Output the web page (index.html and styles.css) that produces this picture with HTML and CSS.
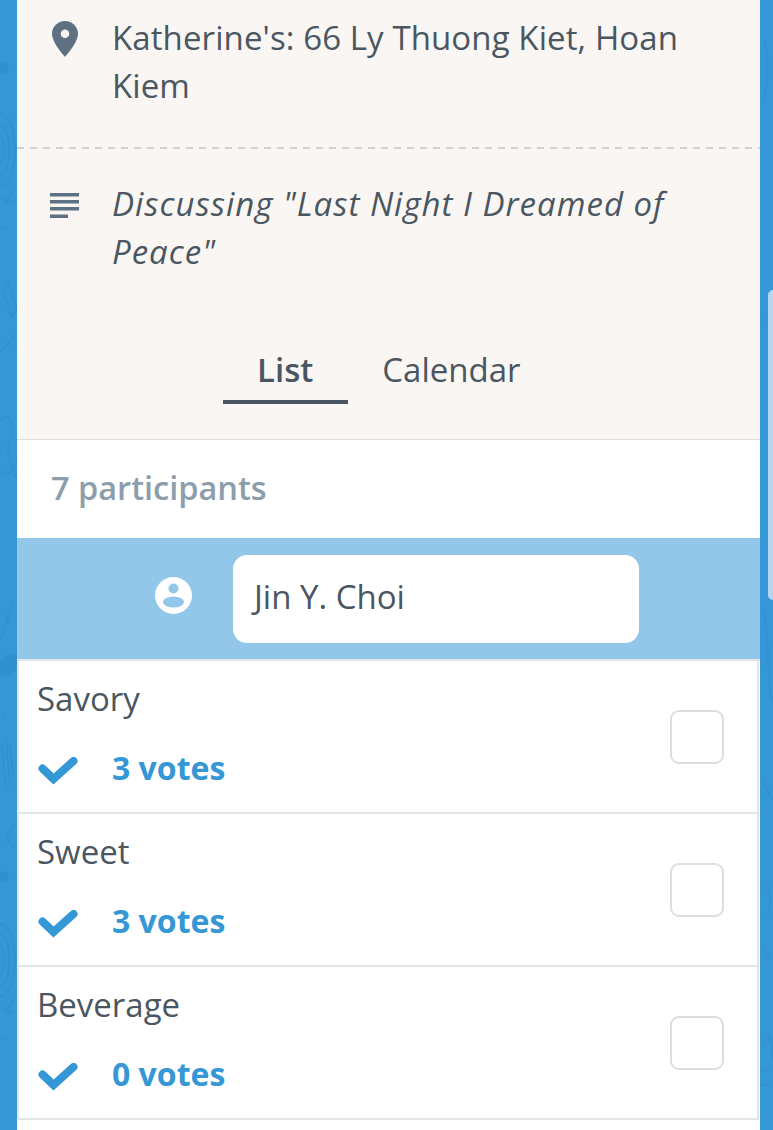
FILE: index.html
```html
<!DOCTYPE html>
<html lang="en">
<head>
    <meta charset="UTF-8">
    <title>Poll</title>
    <link rel="stylesheet" href="styles.css">
</head>
<body>

<!-- faint doodles of the chat wallpaper, only the side strips show them -->
<svg class="wallpaper" viewBox="0 0 773 1130" fill="none" stroke="#3190d0" stroke-width="1.500">
    <ellipse cx="2" cy="150" rx="13" ry="36"/>
    <ellipse cx="1" cy="150" rx="8" ry="25"/>
    <ellipse cx="0" cy="150" rx="4" ry="14"/>
    <circle cx="3" cy="68" r="5" fill="#3190d0"/>
    <path d="M5 205 13 190M2 198 14 204M1 228h5"/>
    <path d="M3 290 12 318 17 310 8 282zM0 352 15 335M14 350h3"/>
    <path d="M0 420C10 410 16 425 10 440 4 455 14 470 16 478M0 470C8 480 12 470 17 462"/>
    <path d="M4 625 14 600M0 640 10 615"/>
    <ellipse cx="9" cy="665" rx="8" ry="12" fill="#3190d0" transform="rotate(40 9 665)"/>
    <path d="M2 720 5 712M2 745 6 790M6 740 10 785M10 745 13 775"/>
    <path d="M14 825 6 838 14 848"/>
    <circle cx="3" cy="877" r="5" fill="#3190d0"/>
    <ellipse cx="2" cy="960" rx="13" ry="36"/>
    <ellipse cx="1" cy="960" rx="8" ry="25"/>
    <ellipse cx="0" cy="960" rx="4" ry="14"/>
    <path d="M5 1015 13 1000M2 1008 14 1014M1 1038h5"/>
    <path d="M762 945 770 960M764 1045C770 1030 773 1040 772 1060M762 1070h10M762 1085h10"/>
    <path d="M764 40C770 60 768 80 764 100M762 320h4M764 610C770 640 766 680 772 700M762 780 772 800M764 890C770 880 772 900 768 915"/>
</svg>

<div class="scroll-thumb"></div>

<div class="card">
    <div class="info">
        <div class="info-row location">
            <svg class="info-icon" viewBox="0 0 26 36"><path fill="#5d7182" fill-rule="evenodd" d="M13 0C5.800 0 0 5.700 0 12.800 0 22 13 36 13 36s13-14 13-23.200C26 5.700 20.200 0 13 0zm0 17a4.300 4.300 0 1 1 0-8.600 4.300 4.300 0 0 1 0 8.600z"/></svg>
            <p class="info-text">Katherine's: 66 Ly Thuong Kiet, Hoan Kiem</p>
        </div>
        <div class="info-row description">
            <svg class="info-icon lines" viewBox="0 0 30 26"><path fill="#5d7182" d="M0 0h29v3.500H0zM0 7h29v3.500H0zM0 14h29v3.500H0zM0 21.500h18V25H0z"/></svg>
            <p class="info-text italic">Discussing "Last Night I Dreamed of Peace"</p>
        </div>
        <div class="tabs">
            <div class="tab active">List</div>
            <div class="tab">Calendar</div>
        </div>
    </div>

    <div class="participants">7 participants</div>

    <div class="name-bar">
        <svg class="user-icon" viewBox="0 0 37 37">
            <circle cx="18.500" cy="18.500" r="18.500" fill="#fff"/>
            <circle cx="18.500" cy="11.500" r="5" fill="#92c7ea"/>
            <ellipse cx="18.500" cy="25" rx="10.500" ry="5.500" fill="#92c7ea"/>
        </svg>
        <div class="name-input">Jin Y. Choi</div>
    </div>

    <div class="option">
        <div class="option-info">
            <div class="option-name">Savory</div>
            <div class="votes">
                <svg class="check" viewBox="0 0 40 29"><path fill="none" stroke="#3498d6" stroke-width="8" stroke-linecap="round" stroke-linejoin="miter" d="M4.500 11.500 15.500 22 35.500 4"/></svg>
                <span>3 votes</span>
            </div>
        </div>
        <div class="checkbox"></div>
    </div>

    <div class="option">
        <div class="option-info">
            <div class="option-name">Sweet</div>
            <div class="votes">
                <svg class="check" viewBox="0 0 40 29"><path fill="none" stroke="#3498d6" stroke-width="8" stroke-linecap="round" stroke-linejoin="miter" d="M4.500 11.500 15.500 22 35.500 4"/></svg>
                <span>3 votes</span>
            </div>
        </div>
        <div class="checkbox"></div>
    </div>

    <div class="option">
        <div class="option-info">
            <div class="option-name">Beverage</div>
            <div class="votes">
                <svg class="check" viewBox="0 0 40 29"><path fill="none" stroke="#3498d6" stroke-width="8" stroke-linecap="round" stroke-linejoin="miter" d="M4.500 11.500 15.500 22 35.500 4"/></svg>
                <span>0 votes</span>
            </div>
        </div>
        <div class="checkbox"></div>
    </div>
</div>

</body>
</html>
```

FILE: styles.css
```css
html, body {
    height: 1130px;
    overflow: hidden;
}
body {
    font-family: "Open Sans", "Noto Sans", sans-serif;
    background-color: #3597d6;
    color: #4a5661;
    margin: 0;
    padding: 0 13px 0 17px;
    position: relative;
}
.wallpaper {
    position: absolute;
    top: 0;
    left: 0;
    width: 773px;
    height: 1130px;
}
.scroll-thumb {
    position: absolute;
    top: 290px;
    right: 0;
    width: 5px;
    height: 310px;
    background: #b5d6ec;
    border-radius: 5px 0 0 5px;
}
.card {
    background: white;
    height: 1130px;
    position: relative;
}
.info {
    background-color: #faf6f3;
    height: 439px;
    border-bottom: 1px solid #dcdfe2;
}
.info-row {
    display: flex;
    padding-left: 33px;
}
.location {
    height: 149px;
    box-sizing: border-box;
    padding-top: 14px;
    background-image: repeating-linear-gradient(to right, #cdd3d8 0 7px, transparent 7px 13px);
    background-size: 100% 2px;
    background-position: bottom;
    background-repeat: no-repeat;
}
.description {
    height: 150px;
    box-sizing: border-box;
    padding-top: 31px;
}
.info-icon {
    width: 26px;
    height: 36px;
    margin: 7px 0 0 2px;
    flex: none;
}
.info-icon.lines {
    width: 30px;
    height: 26px;
    margin: 13px 0 0 0;
}
.info-text {
    margin: 0 0 0 34px;
    padding-right: 60px;
    font-size: 33px;
    line-height: 48px;
    letter-spacing: 0.1px;
}
.italic {
    margin-left: 32px;
    font-style: italic;
    letter-spacing: 1px;
}
.tabs {
    display: flex;
    padding: 47px 0 0 206px;
}
.tab {
    font-size: 33px;
    line-height: 48px;
    height: 54px;
    padding: 0 35px 0 34px;
}
.tab.active {
    font-weight: 600;
    border-bottom: 4px solid #4a5661;
}
.participants {
    height: 98px;
    box-sizing: border-box;
    padding: 24px 0 0 34px;
    font-size: 32.500px;
    line-height: 48px;
    font-weight: 600;
    color: #8c9dab;
}
.name-bar {
    background-color: #92c7ea;
    height: 123px;
    display: flex;
    align-items: center;
    padding-left: 138px;
    box-sizing: border-box;
    border-bottom: 2px solid #e3e5e8;
}
.user-icon {
    width: 37px;
    height: 37px;
    margin-top: -7px;
    flex: none;
}
.name-input {
    background: white;
    width: 406px;
    height: 88px;
    margin-left: 41px;
    margin-top: 1px;
    border-radius: 14px;
    box-sizing: border-box;
    padding-left: 21px;
    font-size: 33px;
    line-height: 84px;
}
.option {
    height: 153px;
    box-sizing: border-box;
    margin-right: 1px;
    border: solid #e3e5e8;
    border-width: 0 2px 2px 2px;
    display: flex;
    align-items: flex-start;
    justify-content: space-between;
}
.option-name {
    font-size: 33px;
    line-height: 48px;
    padding: 14px 0 0 18px;
}
.votes {
    display: flex;
    align-items: center;
    padding: 21px 0 0 19px;
    font-size: 32px;
    line-height: 48px;
    font-weight: 700;
    color: #3597d6;
}
.check {
    width: 40px;
    height: 29px;
    margin: 7px 34px 0 0;
}
.checkbox {
    width: 54px;
    height: 54px;
    box-sizing: border-box;
    border: 2px solid #dcdfe2;
    border-radius: 9px;
    margin: 49px 33px 0 0;
}
```
